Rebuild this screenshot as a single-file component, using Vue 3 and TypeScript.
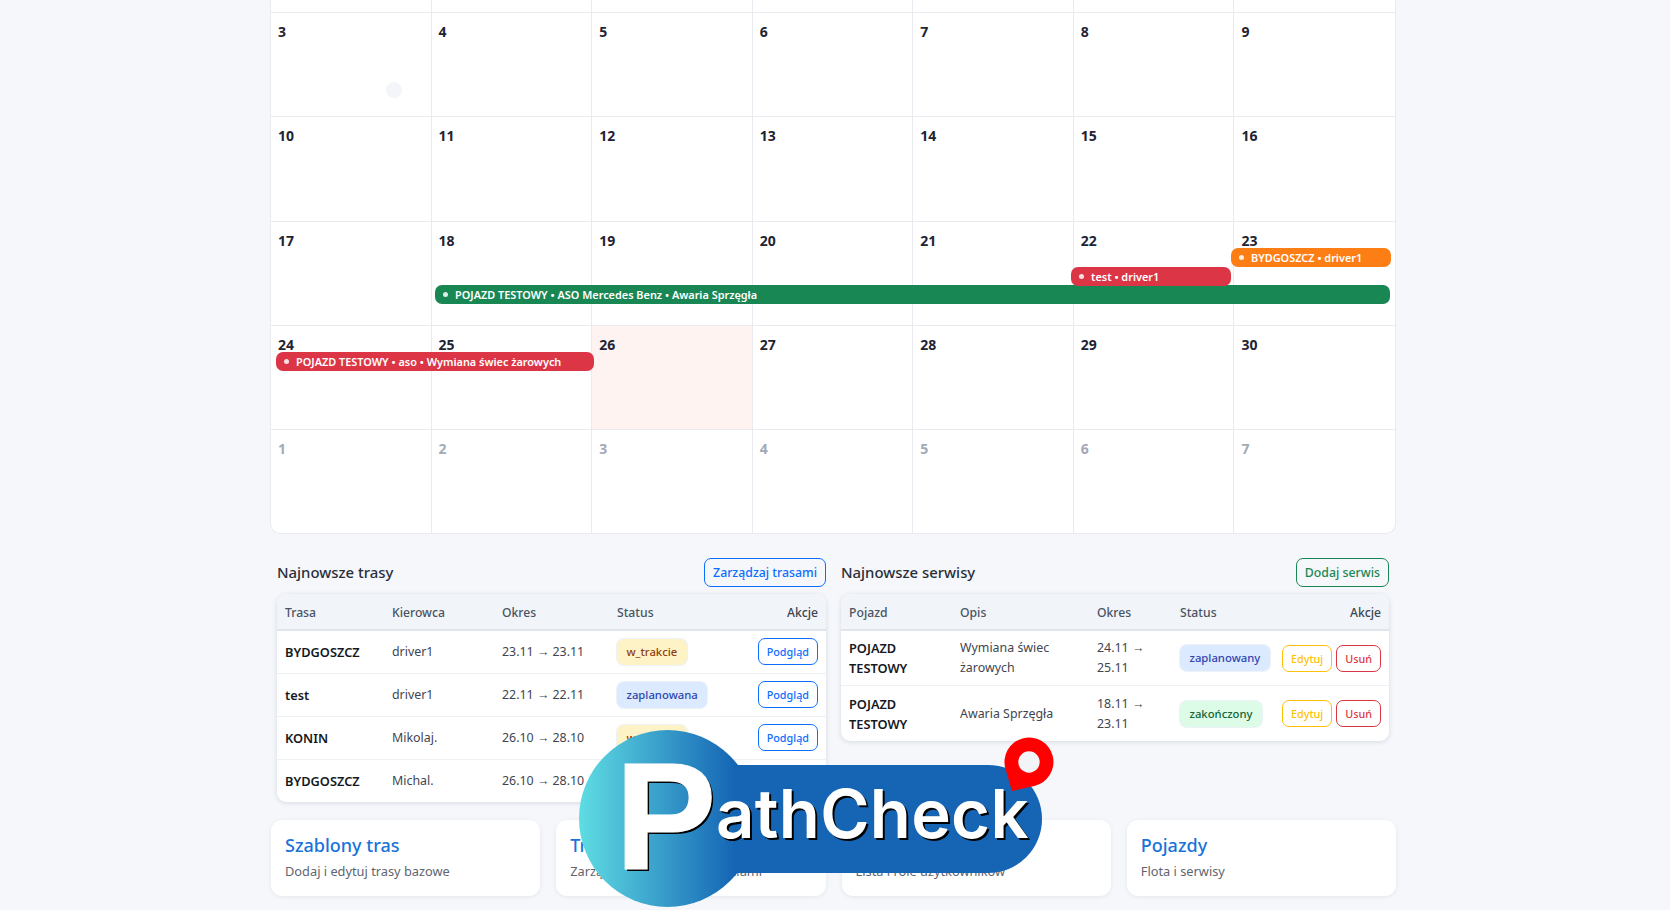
<script setup lang="ts">
interface CalEvent {
  text: string;
  color: string;
  left: number;
  top: number;
  width: number;
}

const firstWeek = 3;
const days: { num: number; muted?: boolean; today?: boolean }[] = [];
for (let d = firstWeek; d <= 30; d++) days.push({ num: d, today: d === 26 });
for (let d = 1; d <= 7; d++) days.push({ num: d, muted: true });

const events: CalEvent[] = [
  { text: 'POJAZD TESTOWY • ASO Mercedes Benz • Awaria Sprzęgła', color: 'green', left: 164, top: 285, width: 955 },
  { text: 'test • driver1', color: 'red', left: 800, top: 267, width: 160 },
  { text: 'BYDGOSZCZ • driver1', color: 'orange', left: 960, top: 248, width: 160 },
  { text: 'POJAZD TESTOWY • aso • Wymiana świec żarowych', color: 'red', left: 5, top: 352, width: 318 },
];

const routes = [
  { name: 'BYDGOSZCZ', driver: 'driver1', period: '23.11 → 23.11', status: 'w_trakcie', cls: 'yellow' },
  { name: 'test', driver: 'driver1', period: '22.11 → 22.11', status: 'zaplanowana', cls: 'blue' },
  { name: 'KONIN', driver: 'Mikolaj.', period: '26.10 → 28.10', status: 'w_trakcie', cls: 'yellow' },
  { name: 'BYDGOSZCZ', driver: 'Michal.', period: '26.10 → 28.10', status: 'zakończona', cls: 'green' },
];

const services = [
  { vehicle: 'POJAZD TESTOWY', desc: 'Wymiana świec żarowych', period: '24.11 → 25.11', status: 'zaplanowany', cls: 'blue' },
  { vehicle: 'POJAZD TESTOWY', desc: 'Awaria Sprzęgła', period: '18.11 → 23.11', status: 'zakończony', cls: 'green' },
];

const tiles = [
  { title: 'Szablony tras', sub: 'Dodaj i edytuj trasy bazowe' },
  { title: 'Trasy', sub: 'Zarządzaj trasami i przydziałami' },
  { title: 'Użytkownicy', sub: 'Lista i role użytkowników' },
  { title: 'Pojazdy', sub: 'Flota i serwisy' },
];
</script>

<template>
  <div class="page">
    <section class="calendar">
      <div class="grid">
        <div v-for="n in 7" :key="'top' + n" class="cell strip"></div>
        <div
          v-for="(d, i) in days"
          :key="i"
          class="cell"
          :class="{ muted: d.muted, today: d.today }"
        >
          {{ d.num }}
        </div>
      </div>
      <div
        v-for="e in events"
        :key="e.text"
        class="event"
        :class="e.color"
        :style="{ left: e.left + 'px', top: e.top + 'px', width: e.width + 'px' }"
      >
        <span class="dot"></span>{{ e.text }}
      </div>
      <span class="cursor"></span>
    </section>

    <div class="panels">
      <section class="panel">
        <div class="panel-head">
          <h2>Najnowsze trasy</h2>
          <button class="btn head primary">Zarządzaj trasami</button>
        </div>
        <div class="card">
          <table class="routes">
            <thead>
              <tr>
                <th>Trasa</th>
                <th>Kierowca</th>
                <th>Okres</th>
                <th>Status</th>
                <th class="end">Akcje</th>
              </tr>
            </thead>
            <tbody>
              <tr v-for="r in routes" :key="r.name + r.period">
                <td class="strong">{{ r.name }}</td>
                <td>{{ r.driver }}</td>
                <td>{{ r.period }}</td>
                <td><span class="badge" :class="r.cls">{{ r.status }}</span></td>
                <td class="end"><button class="btn small primary">Podgląd</button></td>
              </tr>
            </tbody>
          </table>
        </div>
      </section>

      <section class="panel">
        <div class="panel-head">
          <h2>Najnowsze serwisy</h2>
          <button class="btn head success">Dodaj serwis</button>
        </div>
        <div class="card">
          <table class="services">
            <thead>
              <tr>
                <th>Pojazd</th>
                <th>Opis</th>
                <th>Okres</th>
                <th>Status</th>
                <th class="end">Akcje</th>
              </tr>
            </thead>
            <tbody>
              <tr v-for="s in services" :key="s.desc">
                <td class="strong">{{ s.vehicle }}</td>
                <td>{{ s.desc }}</td>
                <td>{{ s.period }}</td>
                <td><span class="badge" :class="s.cls">{{ s.status }}</span></td>
                <td class="end actions">
                  <button class="btn small warning">Edytuj</button>
                  <button class="btn small danger">Usuń</button>
                </td>
              </tr>
            </tbody>
          </table>
        </div>
      </section>
    </div>

    <div class="tiles">
      <a v-for="t in tiles" :key="t.title" class="tile">
        <span class="tile-title">{{ t.title }}</span>
        <span class="tile-sub">{{ t.sub }}</span>
      </a>
    </div>

    <div class="logo">
      <div class="logo-bar"></div>
      <div class="logo-circle"></div>
      <span class="logo-p">P</span>
      <span class="logo-rest">athCheck</span>
      <svg class="logo-pin" viewBox="0 0 60 60" width="60" height="60">
        <path fill="#ff0000" d="M12 56 L5.500 34 A24.500 24.500 0 1 1 34.400 50.900 Z" />
        <circle cx="29" cy="27" r="10.700" fill="#f3f4f8" />
      </svg>
    </div>
  </div>
</template>

<style scoped>
.page {
  position: relative;
  width: 1126px;
  height: 910px;
  margin-left: 270px;
  font-family: "Noto Sans", "Open Sans", sans-serif;
  color: #212529;
}

.calendar {
  position: relative;
  height: 534px;
  background: #fff;
  border-right: 1px solid #e9ebf0;
  border-bottom: 1px solid #e9ebf0;
  border-left: 1px solid #e9ebf0;
  border-radius: 0 0 10px 10px;
  box-sizing: border-box;
}

.grid {
  display: grid;
  grid-template-columns: repeat(7, 1fr);
  grid-template-rows: 13px repeat(5, 104.3px);
}

.cell {
  padding: 8px 7px 0;
  font-size: 14px;
  font-weight: 700;
  line-height: 21px;
  color: #1f2433;
  border-right: 1px solid #e9ebf0;
  border-bottom: 1px solid #e9ebf0;
}

.cell:nth-child(7n) {
  border-right: none;
}

.cell:nth-last-child(-n + 7) {
  border-bottom: none;
}

.strip {
  padding: 0;
}

.muted {
  color: #a3a9b6;
}

.today {
  background: #fff3f2;
}

.cursor {
  position: absolute;
  left: 115px;
  top: 82px;
  width: 16px;
  height: 16px;
  border-radius: 50%;
  background: #f3f5fa;
}

.event {
  position: absolute;
  display: flex;
  align-items: center;
  height: 19px;
  padding-left: 8px;
  box-sizing: border-box;
  border-radius: 7px;
  font-size: 10.900px;
  font-weight: 600;
  color: #fff;
  white-space: nowrap;
}

.event.green {
  background: #198754;
}

.event.red {
  background: #dc3545;
}

.event.orange {
  background: #fd7e14;
}

.dot {
  width: 5px;
  height: 5px;
  margin-right: 7px;
  border-radius: 50%;
  background: #fff;
  opacity: 0.85;
}

.panels {
  display: grid;
  grid-template-columns: 549px 548px;
  gap: 15px;
  margin: 24px 0 0 7px;
}

.panel-head {
  display: flex;
  align-items: center;
  justify-content: space-between;
  height: 29px;
  margin-bottom: 7px;
}

.panel-head h2 {
  margin: 0 0 2px;
  font-size: 14.900px;
  font-weight: 500;
  color: #2a2f3a;
}

.card {
  background: #fff;
  border-radius: 9px;
  overflow: hidden;
  box-shadow: 0 1px 5px rgba(30, 40, 60, 0.14);
}

table {
  width: 100%;
  border-collapse: collapse;
  table-layout: fixed;
  font-size: 12.400px;
  color: #3f4550;
}

th {
  box-sizing: border-box;
  height: 36px;
  padding: 2px 8px 0;
  background: #f1f4f9;
  border-bottom: 2px solid #e1e4ea;
  font-size: 12.200px;
  font-weight: 500;
  text-align: left;
  color: #495563;
}

th.end {
  color: #3f4550;
}

td {
  box-sizing: border-box;
  padding: 0 8px;
  line-height: 20px;
  border-bottom: 1px solid #eef0f3;
}

tbody tr:last-child td {
  border-bottom: none;
}

.routes td {
  height: 43px;
}

.services td {
  height: 55.500px;
}

.routes th:nth-child(1) {
  width: 107px;
}

.routes th:nth-child(2) {
  width: 110px;
}

.routes th:nth-child(3) {
  width: 115px;
}

.routes th:nth-child(4) {
  width: 115px;
}

.services th:nth-child(1) {
  width: 111px;
}

.services th:nth-child(2) {
  width: 137px;
}

.services th:nth-child(3) {
  width: 83px;
}

.services th:nth-child(4) {
  width: 105px;
}

.end {
  text-align: right;
}

.strong {
  font-size: 12.800px;
  font-weight: 600;
  color: #15181e;
}

.actions {
  padding-left: 0;
  white-space: nowrap;
}

.badge {
  display: inline-block;
  padding: 3px 9.500px;
  border-radius: 7px;
  font-size: 11.300px;
  font-weight: 500;
  line-height: 20px;
  box-shadow: 0 0 0 1px rgba(230, 235, 245, 0.7);
}

.badge.yellow {
  background: #fef3c7;
  color: #92400e;
}

.badge.blue {
  background: #dbeafe;
  color: #2f46b0;
}

.badge.green {
  background: #dcfce7;
  color: #166534;
}

.btn {
  box-sizing: border-box;
  border: 1px solid;
  border-radius: 7px;
  background: transparent;
  font-family: inherit;
  font-weight: 500;
  white-space: nowrap;
  padding: 0;
}

.btn.head {
  height: 29px;
  padding: 0 8px;
  font-size: 12.300px;
}

.btn.small {
  height: 27px;
  padding: 0 8px;
  font-size: 10.800px;
}

.actions .btn + .btn {
  margin-left: 4px;
}

.primary {
  border-color: #0d6efd;
  color: #0d6efd;
}

.success {
  border-color: #198754;
  color: #198754;
}

.warning {
  border-color: #ffc107;
  color: #ffc107;
}

.danger {
  border-color: #dc3545;
  color: #dc3545;
}

.tiles {
  display: grid;
  grid-template-columns: repeat(4, 1fr);
  gap: 16px;
  position: absolute;
  top: 820px;
  left: 1px;
  right: 0;
}

.tile {
  display: flex;
  flex-direction: column;
  gap: 6px;
  height: 76px;
  padding: 13px 14px 0;
  box-sizing: border-box;
  background: #fff;
  border-radius: 11px;
  box-shadow: 0 1px 4px rgba(30, 40, 60, 0.08);
}

.tile-title {
  font-size: 18px;
  font-weight: 500;
  line-height: 24px;
  color: #1a73d9;
}

.tile-sub {
  font-size: 12.800px;
  line-height: 17px;
  color: #5f6570;
}

.logo {
  position: absolute;
  left: 309px;
  top: 730px;
  width: 480px;
  height: 178px;
}

.logo-bar {
  position: absolute;
  left: 88px;
  top: 35px;
  width: 375px;
  height: 108px;
  background: #1565b4;
  border-radius: 0 54px 54px 0;
}

.logo-circle {
  position: absolute;
  left: 0;
  top: 0;
  width: 177px;
  height: 177px;
  border-radius: 50%;
  background: linear-gradient(90deg, #5fdde3 0%, #1565b4 88%);
}

.logo-p {
  position: absolute;
  left: 36px;
  top: 0;
  font-family: "Liberation Sans", Arial, sans-serif;
  font-size: 152px;
  font-weight: 700;
  line-height: 172px;
  color: #fff;
  -webkit-text-stroke: 1px #fff;
  text-shadow: 2px 2px 0 #000;
}

.logo-rest {
  position: absolute;
  left: 137px;
  top: 44px;
  font-family: Inter, sans-serif;
  font-size: 67px;
  font-weight: 600;
  letter-spacing: 0.300px;
  line-height: 80px;
  color: #fff;
  text-shadow: 2px 2px 0 #000;
}

.logo-pin {
  position: absolute;
  left: 421px;
  top: 5px;
}
</style>

<style>
html,
body {
  margin: 0;
  background: #f5f7fb;
  overflow: hidden;
}
</style>
